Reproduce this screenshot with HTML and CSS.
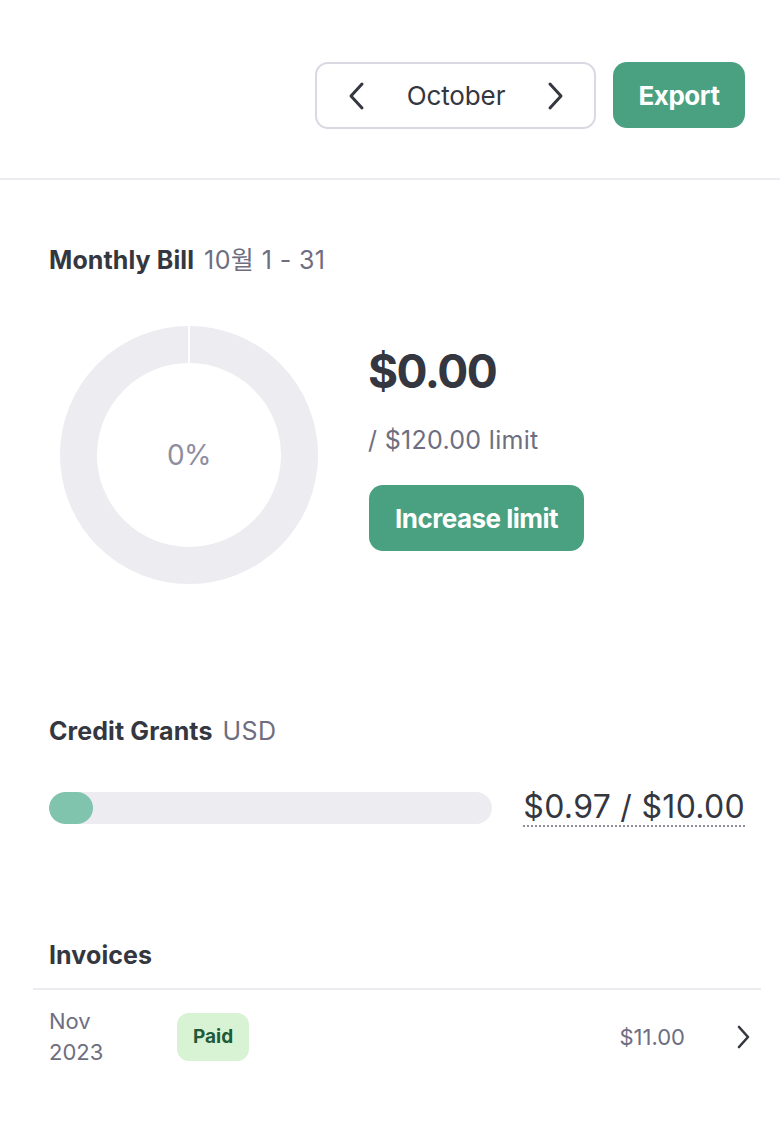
FILE: index.html
```html
<!DOCTYPE html>
<html>
<head>
<meta charset="utf-8">
<link rel="stylesheet" href="styles.css">
</head>
<body>
<header class="topbar">
  <div class="month-picker">
    <span class="chev">
      <svg width="22" height="30" viewBox="0 0 22 30"><path d="M16 3 L5 15 L16 27" fill="none" stroke="#353740" stroke-width="3" stroke-linecap="round" stroke-linejoin="round"/></svg>
    </span>
    <span class="month">October</span>
    <span class="chev">
      <svg width="22" height="30" viewBox="0 0 22 30"><path d="M6 3 L17 15 L6 27" fill="none" stroke="#353740" stroke-width="3" stroke-linecap="round" stroke-linejoin="round"/></svg>
    </span>
  </div>
  <button class="btn btn-export">Export</button>
</header>

<main class="content">
  <section class="bill">
    <h2 class="section-title">Monthly Bill <span class="sub">10월 1 - 31</span></h2>
    <div class="bill-body">
      <div class="donut">
        <svg width="260" height="260" viewBox="0 0 260 260">
          <circle cx="130" cy="130" r="110.5" fill="none" stroke="#ececf1" stroke-width="37"/>
          <line x1="130" y1="0" x2="130" y2="39" stroke="#ffffff" stroke-width="2"/>
        </svg>
        <span class="pct">0%</span>
      </div>
      <div class="bill-info">
        <div class="amount">$0.00</div>
        <div class="limit">/ $120.00 limit</div>
        <button class="btn btn-increase">Increase limit</button>
      </div>
    </div>
  </section>

  <section class="grants">
    <h2 class="section-title">Credit Grants <span class="sub">USD</span></h2>
    <div class="grant-row">
      <div class="bar"><div class="bar-fill" style="width: 44px"></div></div>
      <span class="grant-amount">$0.97 / $10.00</span>
    </div>
  </section>

  <section class="invoices">
    <h2 class="section-title">Invoices</h2>
  </section>
</main>
<div class="invoice-list">
  <div class="invoice-row">
    <div class="inv-date">Nov<br>2023</div>
    <span class="badge">Paid</span>
    <span class="inv-amount">$11.00</span>
    <svg class="inv-chev" width="16" height="26" viewBox="0 0 16 26"><path d="M4 3 L13 13 L4 23" fill="none" stroke="#353740" stroke-width="2.6" stroke-linecap="round" stroke-linejoin="round"/></svg>
  </div>
</div>
</body>
</html>
```

FILE: styles.css
```css
* { box-sizing: border-box; }
html, body { margin: 0; padding: 0; background: #fff; }
body {
  font-family: Inter, "Noto Sans CJK KR", "Liberation Sans", sans-serif;
  color: #353740;
  width: 780px;
}
.topbar {
  display: flex;
  justify-content: flex-end;
  align-items: flex-start;
  gap: 17px;
  padding: 62px 35px 0 0;
  height: 180px;
  border-bottom: 2px solid #ececf1;
}
.month-picker {
  width: 281px;
  height: 67px;
  border: 2px solid #d9d9e3;
  border-radius: 13px;
  display: flex;
  align-items: center;
  justify-content: space-between;
  padding: 0 28px 0 29px;
}
.chev { display: flex; align-items: center; }
.month { font-size: 26px; color: #353740; letter-spacing: -0.1px; }
.btn {
  border: none;
  background: #4aa181;
  color: #fff;
  font-family: inherit;
  font-weight: 700;
  border-radius: 14px;
  cursor: pointer;
  letter-spacing: -0.5px;
}
.btn-export {
  width: 132px;
  height: 66px;
  font-size: 26px;
}
.content { padding: 0 35px 0 49px; }
.section-title {
  margin: 0;
  font-size: 25px;
  line-height: 30px;
  font-weight: 700;
  letter-spacing: 0.1px;
  color: #353740;
}
.section-title .sub {
  font-weight: 400;
  color: #6e6e80;
  margin-left: 4px;
  letter-spacing: 0.4px;
}
.bill { padding-top: 65px; }
.bill-body {
  display: flex;
  align-items: flex-start;
  gap: 51px;
  margin-top: 50px;
  margin-left: 10px;
}
.donut {
  position: relative;
  width: 260px;
  height: 260px;
}
.donut svg { display: block; }
.pct {
  position: absolute;
  inset: 0;
  display: flex;
  align-items: center;
  justify-content: center;
  font-size: 28px;
  color: #8e8ea0;
  letter-spacing: -0.5px;
}
.bill-info { display: flex; flex-direction: column; align-items: flex-start; padding-top: 18px; margin-left: -2px; }
.amount { font-size: 46px; font-weight: 700; letter-spacing: -1.5px; line-height: 56px; }
.limit { font-size: 25px; color: #6e6e80; margin-top: 25px; line-height: 32px; letter-spacing: 0.3px; }
.btn-increase {
  margin-top: 29px;
  height: 66px;
  width: 215px;
  font-size: 26px;
  margin-left: 1px;
}
.grants { padding-top: 131px; }
.grant-row {
  display: flex;
  align-items: center;
  justify-content: space-between;
  margin-top: 43px;
}
.bar {
  width: 443px;
  height: 32px;
  border-radius: 16px;
  background: #ececf1;
  overflow: hidden;
}
.bar-fill { height: 100%; background: #80c4ad; border-radius: 16px; }
.grant-amount {
  font-size: 32px;
  color: #353740;
  letter-spacing: 0.3px;
  border-bottom: 2px dotted #8e8ea0;
  line-height: 36px;
}
.invoices { padding-top: 113px; padding-bottom: 18px; }
.invoice-list {
  margin: 0 19px 0 33px;
  border-top: 2px solid #ececf1;
}
.invoice-row {
  display: flex;
  align-items: center;
  padding: 16px 10px 20px 16px;
}
.inv-date { font-size: 22px; color: #6e6e80; line-height: 31px; width: 128px; letter-spacing: 0; }
.badge {
  background: #d7f3d4;
  color: #1f5a3a;
  font-weight: 700;
  font-size: 19px;
  border-radius: 12px;
  padding: 0 16px;
  height: 48px;
  line-height: 48px;
  letter-spacing: 0;
}
.inv-amount { margin-left: auto; font-size: 22px; color: #6e6e80; letter-spacing: 0; margin-right: 50px; }
.inv-chev { display: block; }
```
